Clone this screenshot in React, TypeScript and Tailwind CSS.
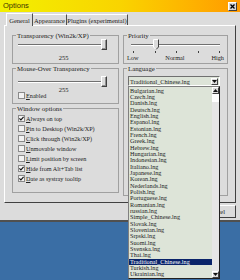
import React from "react";

const languages = [
  "Bulgarian.lng",
  "Czech.lng",
  "Danish.lng",
  "Deutsch.lng",
  "English.lng",
  "Espanol.lng",
  "Estonian.lng",
  "French.lng",
  "Greek.lng",
  "Hebrew.lng",
  "Hungarian.lng",
  "Indonesian.lng",
  "Italiano.lng",
  "Japanese.lng",
  "Korean.lng",
  "Nederlands.lng",
  "Polish.lng",
  "Portuguese.lng",
  "Romanian.lng",
  "russian.lng",
  "Simple_Chinese.lng",
  "Slovak.lng",
  "Slovenian.lng",
  "Srpski.lng",
  "Suomi.lng",
  "Svenska.lng",
  "Thai.lng",
  "Traditional_Chinese.lng",
  "Turkish.lng",
  "Ukrainian.lng",
];

const windowOptions = [
  { key: "A", rest: "lways on top", checked: true },
  { key: "P", rest: "in to Desktop (Win2k/XP)", checked: false },
  { key: "C", rest: "lick through (Win2k/XP)", checked: false },
  { key: "U", rest: "nmovable window", checked: false },
  { key: "L", rest: "imit position by screen", checked: false },
  { key: "H", rest: "ide from Alt+Tab list", checked: true },
  { key: "D", rest: "ate as systray tooltip", checked: true },
];

function Check({ k, rest, checked, h }: { k: string; rest: string; checked?: boolean; h: string }) {
  return (
    <div className={`flex items-center gap-[1px] ${h}`}>
      <span className="flex h-[7px] w-[7px] items-center justify-center border border-[#8a8a8a] bg-[#f2f2f2]">
        {checked && (
          <svg viewBox="0 0 5 5" className="h-[5px] w-[5px]">
            <path d="M0.4 2.4 L1.9 3.9 L4.6 0.8" stroke="#111" strokeWidth="1.1" fill="none" />
          </svg>
        )}
      </span>
      <span className="whitespace-nowrap text-[6.2px] leading-[7px]">
        <span className="underline">{k}</span>
        {rest}
      </span>
    </div>
  );
}

function Track() {
  return (
    <div className="ml-[5px] flex h-[11px] w-[89px] items-center">
      <div className="h-[2px] flex-1 border-b border-t border-b-white border-t-[#707070]" />
      <div className="-ml-[6px] h-[11px] w-[6px] border border-b-[#404040] border-l-white border-r-[#404040] border-t-white bg-[#dcdcdc] shadow-[inset_-1px_-1px_0_#909090]" />
    </div>
  );
}

function Arrow({ up }: { up?: boolean }) {
  return (
    <div className="flex h-[7px] w-[7px] items-center justify-center border border-b-[#404040] border-l-white border-r-[#404040] border-t-white bg-[#dcdcdc]">
      <svg viewBox="0 0 5 3" className="h-[3px] w-[5px]">
        <path d={up ? "M0 3H5L2.5 0Z" : "M0 0H5L2.5 3Z"} fill="#111" />
      </svg>
    </div>
  );
}

export default function App() {
  return (
    <div className="relative h-[280px] w-[240px] overflow-hidden bg-[#3a6ea5] font-['Liberation_Serif',serif] text-[#222]">
      <div className="flex h-[222px] flex-col border-b-2 border-[#505050] bg-[#dcdcdc]">
        {/* title bar */}
        <div className="flex h-[12px] items-center justify-between bg-gradient-to-r from-[#f2f000] via-[#f9d400] to-[#ff9a00] pl-[3px] pr-[3px]">
          <span className="font-['Liberation_Sans',sans-serif] text-[7.5px] leading-[8px] text-[#3a3400]">
            Options
          </span>
          <span className="flex h-[9px] w-[9px] items-center justify-center border border-b-[#404040] border-l-white border-r-[#404040] border-t-white bg-[#d8d8d8]">
            <svg viewBox="0 0 5 5" className="h-[5px] w-[5px]">
              <path d="M0.5 0.5L4.5 4.5M4.5 0.5L0.5 4.5" stroke="#000" strokeWidth="1.3" />
            </svg>
          </span>
        </div>

        {/* tabs */}
        <div className="flex h-[13px] items-end pl-[6px] text-[6.5px] leading-[7px]">
          <div className="relative z-10 -mb-px flex h-[13px] w-[27px] items-center justify-center border-l border-r border-t border-l-white border-r-[#505050] border-t-white bg-[#dcdcdc]">
            General
          </div>
          <div className="flex h-[11px] w-[34px] items-center justify-center whitespace-nowrap border-r border-t border-r-[#505050] border-t-white">
            Appearance
          </div>
          <div className="flex h-[11px] w-[61px] items-center justify-center whitespace-nowrap border-r border-t border-r-[#505050] border-t-white">
            Plugins (experimental)
          </div>
        </div>

        {/* tab panel */}
        <div className="mx-[4px] flex h-[178px] gap-[4px] border border-b-[#404040] border-l-white border-r-[#404040] border-t-white pl-[7px] pt-[6px]">
          <div className="flex w-[107px] flex-col">
            <fieldset className="h-[32px] border border-[#a0a0a0]">
              <legend className="ml-[3px] px-[1px] text-[6.8px] leading-[7px]">Transparency (Win2k/XP)</legend>
              <Track />
              <div className="mt-[4px] pr-[4px] text-center text-[6.5px] leading-[7px]">255</div>
            </fieldset>
            <fieldset className="mt-[1px] h-[39px] border border-[#a0a0a0]">
              <legend className="ml-[3px] px-[1px] text-[6.8px] leading-[7px]">Mouse-Over Transparency</legend>
              <div className="mt-[4px]">
                <Track />
              </div>
              <div className="h-[6px] pr-[4px] text-center text-[6.5px] leading-[6px]">255</div>
              <div className="-mt-[1px] ml-[5px]">
                <Check k="E" rest="nabled" h="h-[7px]" />
              </div>
            </fieldset>
            <fieldset className="mt-[1px] h-[88px] border border-[#a0a0a0]">
              <legend className="ml-[3px] px-[1px] text-[6.8px] leading-[7px]">Window options</legend>
              <div className="ml-[5px] mt-[1.3px] flex flex-col">
                {windowOptions.map((o) => (
                  <Check key={o.key} k={o.key} rest={o.rest} checked={o.checked} h="h-[10.1px]" />
                ))}
              </div>
            </fieldset>
          </div>

          <div className="flex w-[105px] flex-col">
            <fieldset className="h-[32px] border border-[#a0a0a0]">
              <legend className="ml-[3px] px-[1px] text-[6.8px] leading-[7px]">Priority</legend>
              <div className="relative ml-[7px] flex h-[11px] w-[89px] items-center">
                <div className="h-[2px] w-full border-b border-t border-b-white border-t-[#707070]" />
                <svg width="6" height="11" viewBox="0 0 6 11" className="absolute left-[22px] top-0">
                  <path d="M0 0H6V8L3 11L0 8Z" fill="#dcdcdc" />
                  <path d="M0.5 8V0.5H5.5" stroke="#fff" fill="none" />
                  <path d="M5.5 0.5V8L3 10.6" stroke="#404040" fill="none" />
                  <path d="M0.5 8L3 10.6" stroke="#fff" fill="none" />
                </svg>
              </div>
              <div className="ml-[9px] mt-[1px] flex h-[2px] w-[87px] justify-between">
                {[0, 1, 2, 3, 4].map((i) => (
                  <span key={i} className="h-[2px] w-px bg-[#404040]" />
                ))}
              </div>
              <div className="mt-[1px] flex justify-between px-[3px] text-[6.3px] leading-[7px]">
                <span>Low</span>
                <span>Normal</span>
                <span>High</span>
              </div>
            </fieldset>
            <fieldset className="mt-[1px] h-[131px] border border-[#a0a0a0]">
              <legend className="ml-[3px] px-[1px] text-[6.8px] leading-[7px]">Language</legend>
              <div className="ml-[4px] mt-[4px] flex h-[10px] w-[92px] items-center justify-between border border-b-white border-l-[#707070] border-r-white border-t-[#707070] bg-[#dde4d8] pr-px">
                <span className="pl-[1px] text-[6.2px] leading-[7px]">Traditional_Chinese.lng</span>
                <Arrow />
              </div>
            </fieldset>
          </div>
        </div>

        {/* buttons */}
        <div className="flex h-[17px] items-center justify-end gap-[4px] pr-[4px] text-[6.5px]">
          <div className="flex h-[13px] w-[40px] items-center justify-center border border-b-[#404040] border-l-white border-r-[#404040] border-t-white">
            OK
          </div>
          <div className="flex h-[13px] w-[40px] items-center justify-center border border-b-[#404040] border-l-white border-r-[#404040] border-t-white">
            Cancel
          </div>
        </div>
      </div>

      {/* open language dropdown */}
      <div className="absolute left-[128px] top-[86px] flex h-[193px] w-[92px] border border-b-[#202020] border-l-[#808080] border-r-[#202020] border-t-[#808080] bg-[#dde4d8]">
        <div className="flex flex-1 flex-col pt-[0.5px]">
          {languages.map((l) => (
            <div
              key={l}
              className={`h-[6.35px] whitespace-nowrap pl-[1px] text-[6.2px] leading-[6.35px] ${
                l === "Traditional_Chinese.lng" ? "bg-[#0a246a] text-white" : ""
              }`}
            >
              {l}
            </div>
          ))}
        </div>
        <div className="flex w-[7px] flex-col bg-[#e6e6e6]">
          <Arrow up />
          <div className="h-[8px] bg-white" />
          <div className="flex-1" />
          <Arrow />
        </div>
      </div>
    </div>
  );
}
